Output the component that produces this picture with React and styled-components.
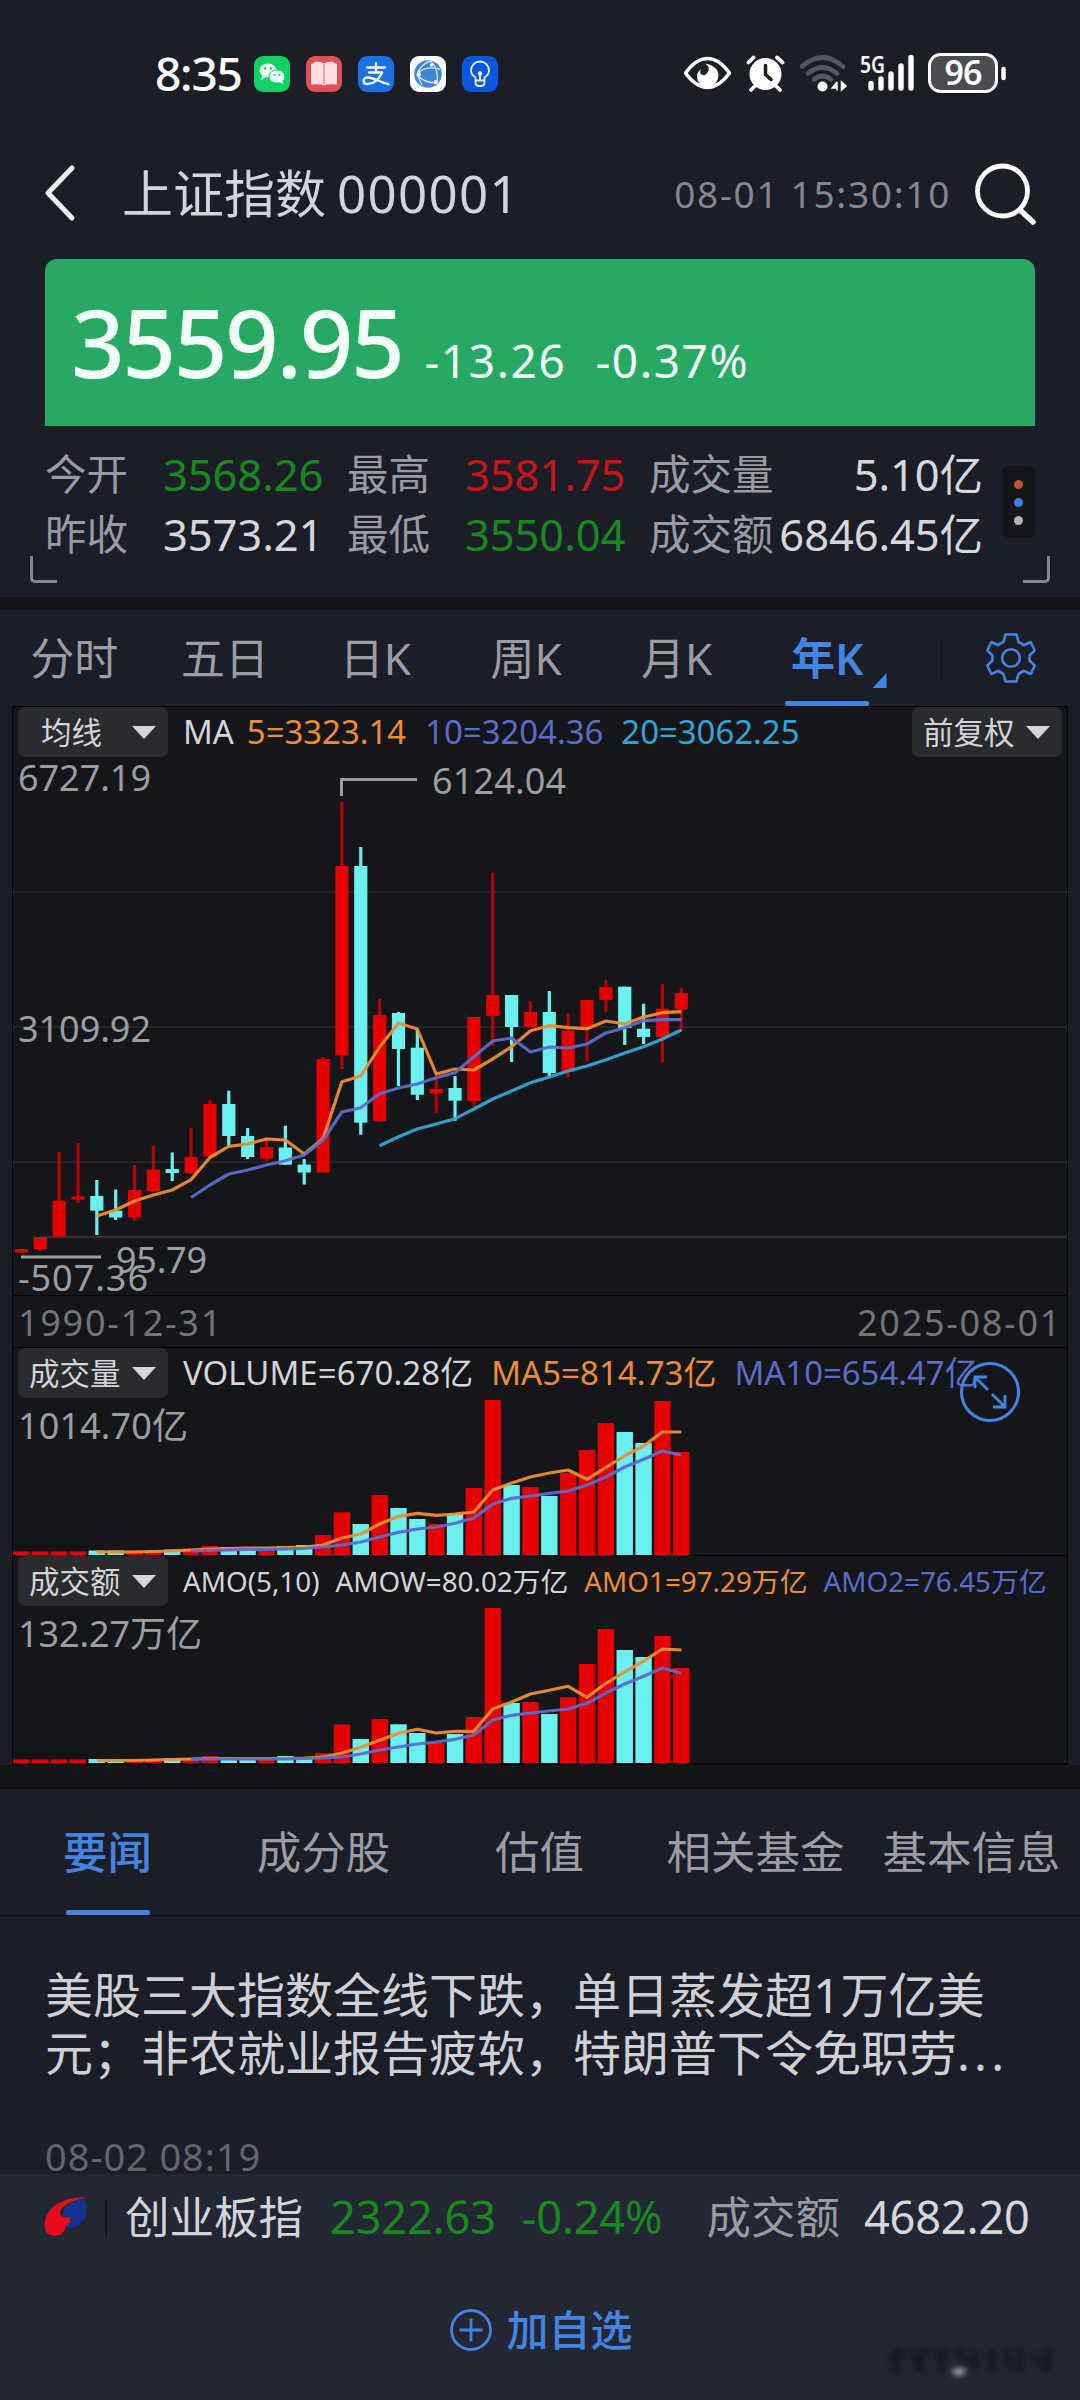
import React from 'react';
import styled, { createGlobalStyle } from 'styled-components';

const RED = '#e60000';
const CYAN = '#6af0ee';
const ORANGE = '#ee8c32';
const INDIGO = '#5b6bc8';
const SKY = '#2fa6d6';
const BLUE = '#4383e2';

// [high, body top, body bottom, low, up]
const candles = [
  [1249, 1249, 1252.5, 1252.5, 1],
  [1237, 1237, 1249, 1251, 1],
  [1152, 1200.7, 1236.5, 1236.5, 1],
  [1143, 1196.5, 1199.6, 1203, 1],
  [1180, 1196, 1210.7, 1235, 0],
  [1189.6, 1210.7, 1217.5, 1220, 0],
  [1165, 1190, 1217.5, 1221, 1],
  [1145.7, 1169.6, 1191, 1192, 1],
  [1152.5, 1169, 1173, 1181, 0],
  [1128, 1157, 1173, 1174, 1],
  [1100, 1104, 1156.5, 1156.5, 1],
  [1090.7, 1104, 1136, 1145.7, 0],
  [1128, 1136, 1157, 1159, 0],
  [1137, 1147, 1158.5, 1161, 1],
  [1125.7, 1147.5, 1164.6, 1164.6, 0],
  [1159, 1164.6, 1172.5, 1184.5, 0],
  [1057, 1059, 1172.5, 1172.5, 1],
  [802, 866, 1055.5, 1069, 1],
  [847, 866, 1122.7, 1134.7, 0],
  [998.7, 1015, 1121, 1121, 1],
  [1012, 1013, 1049, 1086, 0],
  [1029, 1047.7, 1094.7, 1100, 0],
  [1075, 1089, 1093.5, 1113, 1],
  [1076, 1088, 1100.7, 1120.7, 0],
  [1017, 1017, 1101, 1106.7, 1],
  [872.7, 995, 1016, 1046, 1],
  [995, 995, 1027, 1062, 0],
  [1001, 1012, 1027, 1027, 1],
  [991, 1012, 1073, 1076.7, 0],
  [1013, 1030.7, 1072, 1077, 1],
  [1000, 1000, 1028, 1061.7, 1],
  [980, 987, 1000, 1011.7, 1],
  [986.7, 986.7, 1028, 1045, 0],
  [1003.7, 1028.7, 1037, 1044, 0],
  [984, 1008.7, 1037, 1062, 1],
  [987.7, 993, 1009, 1030.7, 1],
];

const ma5 = [1216, 1210, 1201, 1195, 1190, 1179.6, 1157.5, 1146.4, 1144, 1139, 1140, 1154, 1138.5, 1081.7, 1076, 1047, 1023, 1029, 1074, 1069, 1070, 1059, 1046.7, 1030.7, 1025.7, 1027.7, 1028.7, 1021, 1024, 1017, 1012.7, 1011.7];
const ma10 = [1197.5, 1185, 1174, 1170, 1165, 1160.7, 1155, 1140, 1112, 1107.7, 1093.7, 1088, 1084, 1077.7, 1072.7, 1056.7, 1041, 1038, 1052, 1047, 1048, 1044, 1033, 1027.7, 1020.7, 1019.7, 1019.7];
const ma20 = [1145.7, 1136.7, 1129, 1124, 1118.7, 1109, 1099, 1091, 1082.7, 1077, 1071, 1066, 1059.7, 1053, 1046.7, 1039, 1030];

const volume = {
  bars: [3.5, 3.5, 3.5, 3.5, 4.5, 4.5, 4.5, 4.5, 5.5, 6.5, 9, 8, 6, 6, 9, 10, 20, 42.7, 31, 60, 47, 36, 31, 42, 67, 155, 70, 68, 59, 82, 105, 132, 123, 112, 154, 103],
  fast: [3, 3, 3, 3.5, 4, 5, 6, 6.5, 7, 7, 7.5, 8, 10, 17, 21, 31, 38.7, 41.7, 39.7, 41, 43, 65, 72, 78, 82, 85, 75.7, 87.7, 99, 109, 123, 123],
  slow: [4, 4.5, 5, 5.5, 5.5, 6, 6.5, 8, 10, 13, 18, 22.7, 26, 28, 31.7, 37, 51, 56.7, 59, 61.7, 64, 70, 78, 88, 95.7, 104, 100],
};

const amount = {
  bars: [3.5, 3.5, 3.5, 3.5, 4, 4, 4, 4, 4.7, 5, 7, 6, 5, 5, 7, 6, 10, 38.7, 24, 44, 38.7, 30, 20, 29, 46, 155, 60, 61, 49, 65.7, 99, 134, 113, 106, 127, 95],
  fast: [2.5, 2.5, 2.5, 3, 3.5, 4, 4.5, 4.5, 4.5, 4.5, 4.5, 5, 6, 10, 15.7, 22.7, 29.7, 33.7, 30, 31.7, 31.7, 54, 61, 69, 72.7, 76.7, 65.7, 79.7, 91, 102, 114, 113],
  slow: [3.5, 4, 4, 4, 4, 4, 4.5, 5, 6, 9, 13, 16, 19, 21, 23.7, 28, 43, 47.7, 50, 52, 54, 59.7, 70, 79, 86.7, 95, 89.7],
};

const xOf = (i) => 21.4 + i * 18.854;
const line = (values, base) =>
  values
    .map((v, i) => `${xOf(i + 36 - values.length).toFixed(1)},${base ? base - v : v}`)
    .join(' ');

const Candles = () => (
  <ChartSvg viewBox="13 757 1054 538" $height={538}>
    {[892, 1027, 1162].map((y) => (
      <path key={y} d={`M13 ${y}H1067`} stroke="#222326" strokeWidth="2" />
    ))}
    <path d="M40 1237H1067" stroke="#303134" strokeWidth="2.5" />
    <ChartText x="18" y="791" textLength="133">6727.19</ChartText>
    <ChartText x="18" y="1041.5" textLength="133">3109.92</ChartText>
    <ChartText x="18" y="1290.5" textLength="130">-507.36</ChartText>
    <ChartText x="116" y="1272.5" textLength="91">95.79</ChartText>
    <ChartText x="432" y="793.5" textLength="134">6124.04</ChartText>
    <path d="M341.5 796V779.5H417M21 1257H101" fill="none" stroke="#9b9da1" strokeWidth="3" />
    {candles.map(([high, top, bottom, low, up], i) => (
      <g key={i} fill={up ? RED : CYAN}>
        <rect x={xOf(i) - 1.6} y={high} width="3.2" height={low - high} opacity={up ? 0.75 : 1} />
        <rect x={xOf(i) - 6.6} y={top} width="13.2" height={bottom - top} />
      </g>
    ))}
    <Line points={line(ma5)} stroke={ORANGE} />
    <Line points={line(ma10)} stroke={INDIGO} />
    <Line points={line(ma20)} stroke={SKY} />
  </ChartSvg>
);

const Bars = ({ data, label, labelWidth }) => (
  <ChartSvg viewBox="13 0 1054 157" $height={157}>
    {data.bars.map((h, i) => (
      <rect
        key={i}
        x={xOf(i) - 8.2}
        y={157 - h}
        width="16.4"
        height={h}
        fill={candles[i][4] ? RED : CYAN}
      />
    ))}
    <Line points={line(data.fast, 157)} stroke={ORANGE} />
    <Line points={line(data.slow, 157)} stroke={INDIGO} />
    <ChartText x="18" y="41" textLength={labelWidth}>{label}</ChartText>
  </ChartSvg>
);

const AppIcons = () => (
  <IconRow>
    <svg width="36" height="36" viewBox="0 0 36 36">
      <rect width="36" height="36" rx="9" fill="#12cf66" />
      <ellipse cx="14" cy="14.5" rx="8.4" ry="7" fill="#e9fff2" />
      <path d="M8 19l-1 5 5-3z" fill="#e9fff2" />
      <ellipse cx="23" cy="20.5" rx="8" ry="6.6" fill="#e9fff2" stroke="#12cf66" strokeWidth="1" />
      <path d="M25 26l4 2-.5-4z" fill="#e9fff2" />
      <g fill="#12cf66">
        <circle cx="11" cy="12.5" r="1.2" />
        <circle cx="17" cy="12.5" r="1.2" />
        <circle cx="20.5" cy="19" r="1" />
        <circle cx="25.5" cy="19" r="1" />
      </g>
    </svg>
    <svg width="36" height="36" viewBox="0 0 36 36">
      <rect width="36" height="36" rx="9" fill="#df5155" />
      <path d="M5 8l3-1 1-1.5q6 0 9 2 3-2 9-2l1 1.5 3 1v20.5q-9-1-13 1-4-2-13-1z" fill="#ffdfe0" />
      <path d="M18 7.500v21" stroke="#f0898c" strokeWidth="1.4" />
    </svg>
    <svg width="36" height="36" viewBox="0 0 36 36">
      <rect width="36" height="36" rx="9" fill="#1b70e6" />
      <g fill="none" stroke="#f3f9ff" strokeWidth="2.3" strokeLinecap="round">
        <path d="M9 11.500h18M18 7v9M11 16.500h13" />
        <path d="M24 16.500C21 24 15 28 9.500 28c-5 0-5.500-6 0-6.500 6-.3 12 5 21 6.500" />
      </g>
    </svg>
    <svg width="36" height="36" viewBox="0 0 36 36">
      <rect width="36" height="36" rx="9" fill="#fff" />
      <circle cx="18" cy="18" r="13.8" fill="#3f86d6" />
      <path d="M21 5Q10 8 7 19Q14 27 27 27Q29 14 21 5M7 19Q13 9 30 13M12 29Q9 24 8 19" fill="none" stroke="#d4e8ff" strokeWidth="1.3" />
      <g fill="#fff">
        <circle cx="21.5" cy="9" r="1.7" />
        <circle cx="9" cy="18.5" r="2" />
        <circle cx="25.5" cy="26" r="1.9" />
      </g>
    </svg>
    <svg width="36" height="36" viewBox="0 0 36 36">
      <rect width="36" height="36" rx="9" fill="#0b57e0" />
      <g fill="none" stroke="#e8f3ff" strokeWidth="1.8">
        <path d="M13.500 24.500v-3Q9 18.500 9 14.500a9 9 0 0 1 18 0q0 4-4.500 7v3zM13.500 24.500v2.500q0 3 4.500 3t4.500-3v-2.500" />
        <path d="M18 24v-6" strokeWidth="2" />
      </g>
      <circle cx="18" cy="17.5" r="2.3" fill="#e8f3ff" />
    </svg>
  </IconRow>
);

const SystemIcons = () => (
  <svg width="326" height="44" viewBox="682 51 326 44">
    {/* eye comfort */}
    <path d="M685.500 73Q696 58.500 707.500 58.500T729.500 73Q719 87.500 707.500 87.500T685.500 73Z" fill="none" stroke="#fff" strokeWidth="3.4" strokeLinejoin="round" />
    <path d="M705 63.500q6 4 2.500 9-3 4.500-6.500 1.500-2-2 .5-5-5 3-4.500 8.500 1 9 10.500 9t11-10.500q0-10-13.500-12.500z" fill="#fff" />
    {/* alarm */}
    <circle cx="765.5" cy="74" r="16" fill="#fff" />
    <path d="M765.500 65.500v9l5.500 5" fill="none" stroke="#1b1e27" strokeWidth="3.6" strokeLinecap="round" />
    <path d="M748.500 62.500l5-5M777 57.500l5.500 5M755 86l-4 4M776 86l4 4" stroke="#fff" strokeWidth="3.8" strokeLinecap="round" />
    {/* wifi */}
    <g fill="none" stroke="#55575d" strokeWidth="4.6" strokeLinecap="round">
      <path d="M802 66.500q20.500-18 41 0" />
      <path d="M808 73.500q14.500-12 29 0" />
      <path d="M814 79.500q8.500-7 17 0" />
    </g>
    <circle cx="822.5" cy="86.5" r="5" fill="#fff" />
    <path d="M837 82v8.500M837 82l-5 6h5M841.500 90v-8l4.500 4z" fill="#fff" stroke="#fff" strokeWidth="1.5" />
    <NetText x="860" y="73" textLength="25" lengthAdjust="spacingAndGlyphs">5G</NetText>
    <path d="M871 83.500v4.500M881 79v9M891 74v14M901 66v22M911 57.500v30.500" stroke="#fff" strokeWidth="5.4" strokeLinecap="round" />
    {/* battery */}
    <rect x="929.5" y="54.5" width="67" height="37" rx="11" fill="#4b4c51" stroke="#fff" strokeWidth="3" />
    <path d="M1003.500 69v9" stroke="#fff" strokeWidth="4.5" strokeLinecap="round" />
    <BatteryText x="963" y="85" textAnchor="middle">96</BatteryText>
  </svg>
);

const Caret = () => (
  <svg width="24" height="13" viewBox="0 0 24 13">
    <path d="M0 0h24L12 13z" fill="#d6d6d8" />
  </svg>
);

const Gear = () => (
  <svg width="52" height="52" viewBox="-26 -26 52 52" fill="none" stroke={BLUE} strokeWidth="2.6" strokeLinejoin="round">
    <path d="M-5.500 -23.500H5.500L7.500 -16Q10.500 -14.700 12.500 -12.800L19.700 -16L23.700 -7.500L18.500 -2.500V2.500L23.700 7.500L19.700 16L12.500 12.800Q10.500 14.700 7.500 16L5.500 23.500H-5.500L-7.500 16Q-10.500 14.700 -12.500 12.800L-19.700 16L-23.700 7.500L-18.500 2.500V-2.500L-23.700 -7.500L-19.700 -16L-12.500 -12.800Q-10.500 -14.700 -7.500 -16Z" />
    <circle r="8.8" />
  </svg>
);

const BrandLogo = () => (
  <svg width="44" height="40" viewBox="0 0 44 40">
    <path d="M40 3Q44 8 42 17 40 27 31 30 22 32 22 28 28 26 27 20 20 23 19 17 20 9 29 5 36 2 40 3Z" fill="#15328f" />
    <path d="M42 1Q32-1 19 4 4 10 1 24-1 38 10 39 20 39 22 29 28 26 26 20 15 22 16 14 20 5 42 1Z" fill="#e60c1c" />
  </svg>
);

const Smudge = () => (
  <SmudgeSvg width="176" height="48" viewBox="0 0 176 48">
    <g stroke="#16171c" strokeWidth="6">
      <path d="M6 22l18-4M14 12v26M30 16l12 20M44 12l-10 22M52 20h14M60 14v22M74 14l12 14M92 14v20M104 20h12M110 12v24M124 14l6 20M138 12v24M150 18l14 14M166 14v22" />
    </g>
    <path d="M72 34q4 5 10 0" fill="none" stroke="#fff" strokeWidth="4" />
  </SmudgeSvg>
);

const quotes = [
  ['今开', '3568.26', 'down', '最高', '3581.75', 'up', '成交量', '5.10亿'],
  ['昨收', '3573.21', 'flat', '最低', '3550.04', 'down', '成交额', '6846.45亿'],
];

const App = () => (
  <>
    <GlobalStyle />
    <Phone>
      <StatusBar>
        <Clock>8:35</Clock>
        <AppIcons />
        <Spacer />
        <SystemIcons />
      </StatusBar>

      <Header>
        <svg width="32" height="56" viewBox="0 0 32 56">
          <path d="M28 3L4 28l24 25" fill="none" stroke="#f0f0f2" strokeWidth="5" strokeLinecap="round" strokeLinejoin="round" />
        </svg>
        <Title>上证指数</Title>
        <Code>000001</Code>
        <Spacer />
        <Timestamp>08-01 15:30:10</Timestamp>
        <svg width="62" height="62" viewBox="0 0 62 62" fill="none" stroke="#fff" strokeLinecap="round">
          <circle cx="28.5" cy="29" r="25" strokeWidth="4.8" />
          <path d="M46 48l13 12" strokeWidth="5.5" />
        </svg>
      </Header>

      <PriceCard>
        <Price>3559.95</Price>
        <Change $left={22}>-13.26</Change>
        <Change $left={29}>-0.37%</Change>
      </PriceCard>

      <Quotes>
        <div>
          {quotes.map(([a, av, ac, b, bv, bc, c, cv]) => (
            <QuoteRow key={a}>
              <Label>{a}</Label>
              <Value $tone={ac}>{av}</Value>
              <Label>{b}</Label>
              <Value $tone={bc}>{bv}</Value>
              <Label>{c}</Label>
              <Value $tone="flat" $right>{cv}</Value>
            </QuoteRow>
          ))}
        </div>
        <Pager>
          <Dot $color="#c0522f" />
          <Dot $color="#3f7fe6" />
          <Dot $color="#b4b5b8" />
        </Pager>
      </Quotes>
      <Corners>
        <Corner />
        <Corner $right />
      </Corners>
      <Band $height={13} />

      <PeriodTabs>
        {['分时', '五日', '日K', '周K', '月K'].map((t) => (
          <Period key={t}>{t}</Period>
        ))}
        <Period $active>
          年K
          <Notch />
        </Period>
        <Settings>
          <Gear />
        </Settings>
      </PeriodTabs>

      <ChartBox>
        <Legend>
          <Picker $indent={12}>均线<Caret /></Picker>
          <LegendText>MA</LegendText>
          <LegendText $color={ORANGE} $left={13}>5=3323.14</LegendText>
          <LegendText $color={INDIGO} $left={19}>10=3204.36</LegendText>
          <LegendText $color={SKY} $left={18}>20=3062.25</LegendText>
          <Spacer />
          <Picker>前复权<Caret /></Picker>
        </Legend>
        <Candles />
        <Dates>
          <span>1990-12-31</span>
          <span>2025-08-01</span>
        </Dates>
        <Legend>
          <Picker>成交量<Caret /></Picker>
          <LegendText $ls={0.1}>VOLUME=670.28亿</LegendText>
          <LegendText $ls={0.1} $color={ORANGE} $left={18}>MA5=814.73亿</LegendText>
          <LegendText $color={INDIGO} $left={18}>MA10=654.47亿</LegendText>
          <Expand>
            <svg width="36" height="36" viewBox="0 0 36 36" fill="none" stroke={BLUE} strokeWidth="2.8">
              <path d="M16 16L3 3M3 14V3h12M20 20l13 13M33 21v12H21" />
            </svg>
          </Expand>
        </Legend>
        <Bars data={volume} label="1014.70亿" labelWidth={170} />
        <Legend>
          <Picker>成交额<Caret /></Picker>
          <LegendText $small>AMO(5,10)</LegendText>
          <LegendText $small $left={16}>AMOW=80.02万亿</LegendText>
          <LegendText $small $color={ORANGE} $left={16}>AMO1=97.29万亿</LegendText>
          <LegendText $small $color={INDIGO} $left={16}>AMO2=76.45万亿</LegendText>
        </Legend>
        <Bars data={amount} label="132.27万亿" labelWidth={184} />
      </ChartBox>
      <Band $height={24} />

      <NewsTabs>
        <NewsTab $active>要闻</NewsTab>
        <NewsTab>成分股</NewsTab>
        <NewsTab>估值</NewsTab>
        <NewsTab>相关基金</NewsTab>
        <NewsTab>基本信息</NewsTab>
      </NewsTabs>

      <News>
        <Headline>
          美股三大指数全线下跌，单日蒸发超1万亿美<br />
          元；非农就业报告疲软，特朗普下令免职劳<Ellipsis>...</Ellipsis>
        </Headline>
        <NewsTime>08-02 08:19</NewsTime>
      </News>

      <Footer>
        <Ticker>
          <BrandLogo />
          <Divider />
          <TickerName>创业板指</TickerName>
          <Value $tone="down" $big>2322.63</Value>
          <Value $tone="down" $big>-0.24%</Value>
          <TickerLabel>成交额</TickerLabel>
          <Value $tone="flat" $big>4682.20</Value>
        </Ticker>
        <AddButton>
          <svg width="42" height="42" viewBox="0 0 42 42" fill="none" stroke={BLUE} strokeWidth="2.8">
            <circle cx="21" cy="21" r="19.5" />
            <path d="M21 9.500v23M9.500 21h23" />
          </svg>
          加自选
        </AddButton>
        <Smudge />
      </Footer>
    </Phone>
  </>
);

const GlobalStyle = createGlobalStyle`
  body {
    margin: 0;
    background: #1b1e27;
  }

  * {
    box-sizing: border-box;
  }

  svg {
    display: block;
    flex: none;
    overflow: visible;
  }
`;

const Phone = styled.div`
  width: 1080px;
  height: 2400px;
  display: flex;
  flex-direction: column;
  background: #1b1e27;
  color: #d3d4d8;
  font-family: 'Noto Sans', 'Noto Sans CJK SC', sans-serif;
  white-space: nowrap;
  overflow: hidden;
`;

const Spacer = styled.div`
  flex: 1;
`;

const StatusBar = styled.div`
  height: 146px;
  flex: none;
  display: flex;
  align-items: center;
  padding: 0 72px 0 155px;
`;

const Clock = styled.div`
  width: 99px;
  color: #fff;
  font-size: 46px;
  font-weight: 500;
  letter-spacing: -1.2px;
  line-height: 50px;
`;

const IconRow = styled.div`
  display: flex;
  gap: 16px;
  padding-top: 2px;
`;

const NetText = styled.text`
  fill: #fff;
  font-size: 24px;
  font-weight: 600;
`;

const BatteryText = styled.text`
  fill: #fff;
  font-size: 34px;
  font-weight: 600;
  letter-spacing: -1px;
`;

const Header = styled.div`
  height: 113px;
  flex: none;
  display: flex;
  align-items: center;
  padding: 0 44px 20px;
`;

const Title = styled.div`
  margin-left: 46px;
  font-size: 51px;
  line-height: 60px;
`;

const Code = styled.div`
  margin-left: 11px;
  font-size: 51px;
  letter-spacing: 1.3px;
  line-height: 60px;
`;

const Timestamp = styled.div`
  margin-right: 23px;
  padding-top: 2px;
  color: #85878d;
  font-size: 37px;
  letter-spacing: 1.7px;
  line-height: 60px;
`;

const PriceCard = styled.div`
  height: 167px;
  flex: none;
  display: flex;
  align-items: baseline;
  margin: 0 45px;
  padding: 13px 26px 0;
  border-radius: 12px 12px 0 0;
  background: #27a964;
  color: #f2fff8;
`;

const Price = styled.div`
  font-size: 94px;
  font-weight: 500;
  line-height: 140px;
  letter-spacing: -2.4px;
`;

const Change = styled.div`
  margin-left: ${(p) => p.$left}px;
  font-size: 46px;
  letter-spacing: 1.6px;
`;

const Quotes = styled.div`
  height: 130px;
  flex: none;
  display: flex;
  justify-content: space-between;
  padding: 18px 45px 0;
`;

const QuoteRow = styled.div`
  height: 60px;
  display: grid;
  grid-template-columns: 118px 184px 118px 184px 125px 209px;
  align-items: center;
  line-height: 60px;
`;

const Label = styled.div`
  color: #999ba1;
  font-size: 41.5px;
`;

const tones = { up: '#c4151b', down: '#17891f', flat: '#d6d7da' };

const Value = styled.div`
  color: ${(p) => tones[p.$tone]};
  font-size: ${(p) => (p.$big ? 45.2 : 43.5)}px;
  letter-spacing: ${(p) => (p.$big ? '-0.2' : '-0.1')}px;
  text-align: ${(p) => (p.$right ? 'right' : 'left')};
`;

const Pager = styled.div`
  width: 33px;
  height: 72px;
  display: flex;
  flex-direction: column;
  align-items: center;
  justify-content: center;
  gap: 9px;
  margin-top: 22px;
  border-radius: 6px;
  background: #15161a;
`;

const Dot = styled.i`
  width: 9px;
  height: 9px;
  border-radius: 50%;
  background: ${(p) => p.$color};
`;

const Corners = styled.div`
  height: 41px;
  flex: none;
  display: flex;
  justify-content: space-between;
  padding: 0 30px;
`;

const Corner = styled.div`
  width: 27px;
  height: 27px;
  border: solid #85878c;
  border-width: ${(p) => (p.$right ? '0 3px 3px 0' : '0 0 3px 3px')};
  border-radius: ${(p) => (p.$right ? '0 0 5px 0' : '0 0 0 5px')};
`;

const Band = styled.div`
  height: ${(p) => p.$height}px;
  flex: none;
  background: #141518;
`;

const PeriodTabs = styled.div`
  height: 96px;
  flex: none;
  display: grid;
  grid-template-columns: repeat(6, 150.6px) 1fr;
  grid-template-rows: 96px;
`;

const Period = styled.div`
  position: relative;
  display: flex;
  justify-content: center;
  padding-right: 2px;
  color: ${(p) => (p.$active ? BLUE : '#9b9da2')};
  font-size: 44px;
  font-weight: ${(p) => (p.$active ? 600 : 400)};
  line-height: 96px;

  &::after {
    content: '';
    display: ${(p) => (p.$active ? 'block' : 'none')};
    position: absolute;
    bottom: 0;
    width: 84px;
    height: 5px;
    border-radius: 2px;
    background: ${BLUE};
  }
`;

const Notch = styled.i`
  position: absolute;
  right: 17px;
  bottom: 18px;
  width: 14px;
  height: 15px;
  background: ${BLUE};
  clip-path: polygon(100% 0, 100% 100%, 0 100%);
`;

const Settings = styled.div`
  height: 44px;
  display: flex;
  align-items: center;
  margin: 26px 0 0 37px;
  padding-left: 43px;
  border-left: 1px solid #14161c;
`;

const ChartBox = styled.div`
  height: 1059px;
  flex: none;
  margin: 0 12px;
  border: 1px solid #050506;
  background: #15161a;
`;

const Legend = styled.div`
  position: relative;
  height: 50px;
  display: flex;
  align-items: center;
  padding: 0 5px;
`;

const Picker = styled.div`
  width: 150px;
  height: 50px;
  flex: none;
  display: flex;
  align-items: center;
  justify-content: space-between;
  padding: 0 12px 0 11px;
  border-radius: 7px;
  background: #2a2b2e;
  font-size: 30.5px;
  line-height: 50px;
  text-indent: ${(p) => p.$indent || 0}px;

  & + * {
    margin-left: 15px;
  }
`;

const LegendText = styled.div`
  margin-left: ${(p) => p.$left}px;
  color: ${(p) => p.$color || '#d3d4d8'};
  font-size: ${(p) => (p.$small ? 27.8 : 32.9)}px;
  letter-spacing: ${(p) => p.$ls || 0}px;
  line-height: 50px;
`;

const ChartSvg = styled.svg`
  width: 1054px;
  height: ${(p) => p.$height}px;
  border-bottom: 1px solid #050506;
  box-sizing: content-box;
`;

const ChartText = styled.text`
  fill: #9b9da1;
  font-size: 36px;
`;

const Line = styled.polyline`
  fill: none;
  stroke-width: 3.2px;
  stroke-linejoin: round;
  opacity: 0.95;
`;

const Dates = styled.div`
  height: 52px;
  display: flex;
  justify-content: space-between;
  padding: 0 5px 0 5px;
  border-bottom: 1px solid #050506;
  color: #737478;
  font-size: 36px;
  letter-spacing: 1.7px;
  line-height: 53px;
`;

const Expand = styled.div`
  position: absolute;
  top: 14px;
  left: 947px;
  width: 60px;
  height: 60px;
  display: flex;
  align-items: center;
  justify-content: center;
  border: 3px solid ${BLUE};
  border-radius: 50%;
`;

const NewsTabs = styled.div`
  height: 127px;
  flex: none;
  display: grid;
  grid-template-columns: repeat(5, 216px);
  border-bottom: 1px solid #13151b;
`;

const NewsTab = styled.div`
  position: relative;
  display: flex;
  justify-content: center;
  padding-right: 1px;
  line-height: 125px;
  color: ${(p) => (p.$active ? BLUE : '#9b9da2')};
  font-size: 44.5px;
  font-weight: ${(p) => (p.$active ? 500 : 400)};

  &::after {
    content: '';
    display: ${(p) => (p.$active ? 'block' : 'none')};
    position: absolute;
    bottom: 0;
    width: 84px;
    height: 5px;
    border-radius: 2px;
    background: ${BLUE};
  }
`;

const News = styled.div`
  height: 258px;
  flex: none;
  padding: 50px 45px 0;
`;

const Headline = styled.div`
  color: #cfd0d4;
  font-size: 48px;
  line-height: 57.5px;
`;

const Ellipsis = styled.span`
  letter-spacing: 4.2px;
`;

const NewsTime = styled.div`
  margin-top: 45px;
  color: #63656b;
  font-size: 38px;
  letter-spacing: 0.9px;
  line-height: 60px;
`;

const Footer = styled.div`
  position: relative;
  flex: 1;
  background: #232733;
`;

const Ticker = styled.div`
  height: 86px;
  display: flex;
  align-items: center;
  padding-left: 44px;
  line-height: 86px;

  & > ${Value} {
    margin-right: 26px;
  }
`;

const Divider = styled.i`
  width: 2px;
  height: 36px;
  margin: 0 18px 0 17px;
  background: #151720;
`;

const TickerName = styled.div`
  margin-right: 27px;
  font-size: 44.5px;
`;

const TickerLabel = styled.div`
  margin-left: 18px;
  margin-right: 24px;
  color: #999ba1;
  font-size: 44.5px;
`;

const AddButton = styled.div`
  height: 140px;
  display: flex;
  align-items: center;
  justify-content: center;
  gap: 14px;
  padding-left: 3px;
  color: ${BLUE};
  font-size: 42px;
  font-weight: 500;
  line-height: 140px;
`;

const SmudgeSvg = styled.svg`
  position: absolute;
  right: 22px;
  bottom: 16px;
  filter: blur(3px);
`;

export default App;
